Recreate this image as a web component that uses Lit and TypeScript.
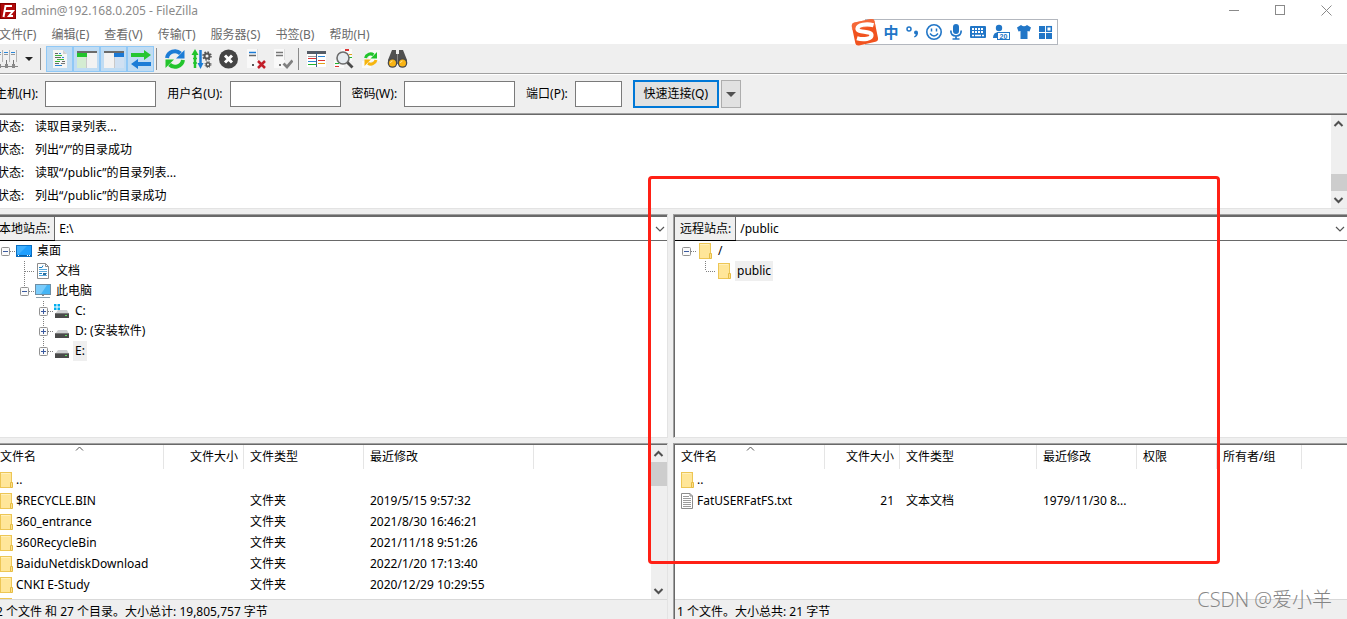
import { LitElement, html, svg, css, nothing, TemplateResult } from "lit";
import { customElement, property } from "lit/decorators.js";
import { classMap } from "lit/directives/class-map.js";

const folder = html`<svg width="13" height="16" viewBox="0 0 13 16" aria-hidden="true">
  <rect x="0.5" y="0.5" width="11" height="15" fill="#ffe699" stroke="#edc655" />
  <rect x="1" y="1" width="9" height="1" fill="#fff0bd" />
  <path d="M10.5 15.5V10.5h2v5z" fill="#ffe08a" stroke="#e5bc45" />
</svg>`;

const textFile = html`<svg width="13" height="16" viewBox="0 0 13 16" aria-hidden="true">
  <path d="M0.5 0.5h8.5l2.5 2.5v12.500h-11z" fill="#fff" stroke="#8c8c8c" />
  <path d="M9 0.500v2.500h2.500" fill="none" stroke="#8c8c8c" />
  <path d="M2 3.500h6M2 5.500h8M2 7.500h8M2 9.500h8M2 11.500h8M2 13.500h8" stroke="#9b9b9b" />
</svg>`;

const desktop = html`<svg width="16" height="16" viewBox="0 0 16 16" aria-hidden="true">
  <rect x="0.5" y="2.500" width="15" height="11" fill="#1e9fff" stroke="#0a6fc2" />
  <path d="M1 3h10L3 11H1z" fill="#3fb0ff" />
  <path d="M1 12.500h14" stroke="#0b5fa5" />
  <path d="M2 12.500h1M11 12.500h1M13 12.500h1" stroke="#fff" />
</svg>`;

const documents = html`<svg width="16" height="16" viewBox="0 0 16 16" aria-hidden="true">
  <path d="M2.500 0.500h8l3 3v12h-11z" fill="#fff" stroke="#8b8b8b" />
  <path d="M10.500 0.500v3h3" fill="none" stroke="#8b8b8b" />
  <path d="M4 6.500h8M4 8.500h8M8 10.500h4M4 12.500h8" stroke="#5aa9dc" />
  <path d="M4 4.500h3l1-2M4 10.500h3" stroke="#1780c4" fill="none" />
  <rect x="8" y="10" width="3" height="2" fill="#2d6f9c" />
</svg>`;

const computer = html`<svg width="16" height="16" viewBox="0 0 16 16" aria-hidden="true">
  <rect x="0.5" y="1.500" width="15" height="10" fill="#45b5f5" stroke="#6f8ea3" />
  <path d="M1 2h11L6 11H1z" fill="#7accfb" />
  <path d="M7 12h2v1H7z" fill="#888" />
  <path d="M1 14.500h14" stroke="#8aa0ad" />
</svg>`;

const drive = (system = false) => html`<svg width="16" height="16" viewBox="0 0 16 16" aria-hidden="true">
  ${system
    ? svg`<path d="M0 1h2.500v2.500H0zM3.500 1H6v2.500H3.500zM0 4.500h2.500V7H0zM3.500 4.500H6V7H3.500z" fill="#00adef" />`
    : nothing}
  <path d="M4 7h9l2 4H1z" fill="#cfd1d3" />
  <rect x="1" y="10" width="14" height="5" fill="#4a4a4a" />
  <rect x="1" y="10" width="14" height="1" fill="#777" />
  <rect x="11" y="12" width="2" height="1" fill="#5de05d" />
</svg>`;

const chevron = html`<svg width="10" height="6" viewBox="0 0 10 6" aria-hidden="true">
  <path d="M1 1l4 4 4-4" fill="none" stroke="#555" stroke-width="1.200" />
</svg>`;

const tool = (body: TemplateResult) =>
  html`<svg width="21" height="22" viewBox="0 0 21 22" aria-hidden="true">${body}</svg>`;

const tools = {
  sites: tool(svg`<path d="M0 2h5v12H0zM7 2h5v12H7zM14 2h5v12h-5z" fill="#f2f2f2" />
    <path d="M0 4.500h4M7 4.500h4M14 4.500h4" stroke="#2a86d6" />
    <path d="M0 6.500h4M7 6.500h4M14 6.500h4" stroke="#999" />
    <path d="M5.500 2v12M12.500 2v12M19.500 2v12" stroke="#b5b5b5" />
    <path d="M2.500 12v6M9.500 12v6M16.500 12v6" stroke="#777" /><path d="M0 18.500h21" stroke="#888" />
    <path d="M1 16h3v4H1zM8 16h3v4H8zM15 16h3v4h-3z" fill="#8a8a8a" />`),
  log: tool(svg`<path d="M4 2h10l4 4v14H4z" fill="#f5f5f5" /><path d="M14 2v4h4z" fill="#cfcfcf" />
    <path d="M6 5.500h3M6 9.500h6M6 15.500h4M13 13.500h3" stroke="#666" />
    <path d="M10 5.500h2M13 9.500h2M6 17.500h7" stroke="#2a86d6" />
    <path d="M6 7.500h7M8 11.500h7M6 13.500h5" stroke="#3bb43b" />
    <path d="M12 15.500h4" stroke="#777" />`),
  localTree: tool(svg`<rect x="1" y="3" width="20" height="17" fill="#f2f2f2" />
    <rect x="1" y="3" width="20" height="2" fill="#6b6b6b" />
    <rect x="1" y="5" width="10" height="4" fill="#22c42c" /><rect x="1" y="9" width="10" height="11" fill="#d4ecd2" />
    <path d="M10.500 9v11" stroke="#c9c9c9" />`),
  remoteTree: tool(svg`<rect x="1" y="3" width="20" height="17" fill="#f2f2f2" />
    <rect x="1" y="3" width="20" height="2" fill="#6b6b6b" />
    <rect x="11" y="5" width="10" height="4" fill="#1a78d4" /><rect x="11" y="9" width="10" height="11" fill="#cfe0f2" />
    <path d="M11.500 9v11" stroke="#c9c9c9" />`),
  queue: tool(svg`<path d="M1 5h13V2l7 5-7 5V9H1z" fill="#25c631" />
    <path d="M21 14H8v-3l-7 5 7 5v-3h13z" fill="#1c7cd6" />`),
  refresh: tool(svg`<path d="M3 10A8 8 0 0 1 16.500 5.500" fill="none" stroke="#1c7cd6" stroke-width="4" />
    <path d="M20.500 2v8.500H12z" fill="#1c7cd6" />
    <path d="M19 12A8 8 0 0 1 5.500 16.500" fill="none" stroke="#22c42c" stroke-width="4" />
    <path d="M1.500 20v-8.500H10z" fill="#22c42c" />`),
  process: tool(svg`<path d="M4 20V5" stroke="#22c42c" stroke-width="2.500" /><path d="M0.500 7L4 1l3.500 6z" fill="#22c42c" />
    <path d="M2 10.500h4M2 15h4" stroke="#22c42c" stroke-width="1.500" />
    <path d="M9.500 2v15" stroke="#1c7cd6" stroke-width="2.500" /><path d="M6.500 15h6l-3 6z" fill="#1c7cd6" />
    <circle cx="16" cy="8" r="2.500" fill="none" stroke="#555" stroke-width="2" />
    <circle cx="16" cy="8" r="4" fill="none" stroke="#555" stroke-width="1.500" stroke-dasharray="1.600 1.540" />
    <circle cx="17" cy="16.500" r="1.800" fill="none" stroke="#555" stroke-width="1.500" />
    <circle cx="17" cy="16.500" r="3" fill="none" stroke="#555" stroke-dasharray="1.200 1.200" />`),
  cancel: tool(svg`<circle cx="10.500" cy="11" r="9.500" fill="#454545" />
    <path d="M7 7.500l7 7M14 7.500l-7 7" stroke="#fff" stroke-width="3" />`),
  disconnect: tool(svg`<path d="M2 1h11v19H2z" fill="#f9f9f9" /><path d="M12.500 1v11" stroke="#ddd" />
    <path d="M4 4.500h7" stroke="#1c7cd6" stroke-width="1.500" /><path d="M4 7.500h7" stroke="#666" stroke-width="1.500" />
    <rect x="7" y="16" width="2" height="2" fill="#555" />
    <path d="M13 13l7 7M20 13l-7 7" stroke="#c21f2a" stroke-width="2.500" />`),
  reconnect: tool(svg`<path d="M2 1h11v19H2z" fill="#f9f9f9" /><path d="M12.500 1v11" stroke="#ddd" />
    <path d="M4 4.500h7M4 7.500h7" stroke="#777" stroke-width="1.500" />
    <rect x="7" y="16" width="2" height="2" fill="#777" />
    <path d="M11.500 15.500l3.500 3.500 5.500-6.500" fill="none" stroke="#808080" stroke-width="2.800" />`),
  filter: tool(svg`<rect x="1" y="4" width="19" height="15" fill="#fff" /><rect x="1" y="3" width="19" height="3" fill="#555c66" />
    <path d="M2 8.500h8" stroke="#999" /><path d="M2 10.500h8M12 12.500h7" stroke="#d33" />
    <path d="M2 13.500h8" stroke="#2a86d6" /><path d="M2 16.500h8" stroke="#22b42c" />
    <path d="M12 8.500h7" stroke="#2a86d6" /><path d="M12 15.500h7" stroke="#e5a11a" />
    <path d="M10.500 4v15" stroke="#3f5f85" />`),
  search: tool(svg`<rect x="8" y="1" width="11" height="12" fill="#fafafa" /><rect x="1" y="12" width="10" height="8" fill="#fafafa" />
    <path d="M12 2h4" stroke="#d33" stroke-width="2" /><path d="M16 6.500h3" stroke="#e5a11a" />
    <path d="M16 9.500h3M2 15.500h4" stroke="#22b42c" /><path d="M2 18.500h4" stroke="#d33" />
    <circle cx="10" cy="10" r="6" fill="#e6ebef" stroke="#6c6c6c" stroke-width="1.600" />
    <path d="M14.500 14.500l5 5" stroke="#4a4a4a" stroke-width="2.800" />`),
  sync: tool(svg`<rect x="9" y="2" width="11" height="11" fill="#fafafa" /><rect x="2" y="13" width="9" height="7" fill="#fafafa" />
    <path d="M5.500 10A5.200 5.200 0 0 1 13.500 6.800" fill="none" stroke="#22c42c" stroke-width="3" /><path d="M17 4v6.500H10.500z" fill="#22c42c" />
    <path d="M16 12A5.200 5.200 0 0 1 8 15.200" fill="none" stroke="#f6b50e" stroke-width="3" /><path d="M4.500 18v-6.500H11z" fill="#f6b50e" />`),
  find: tool(svg`<path d="M5 2h4v4h3V2h4l4 10v4H1v-4z" fill="#505050" /><path d="M10.500 6v10" stroke="#888" />
    <circle cx="5.500" cy="15" r="4.800" fill="#4a4a4a" /><circle cx="15.500" cy="15" r="4.800" fill="#4a4a4a" />
    <circle cx="5.500" cy="15" r="3.500" fill="#f9b414" /><circle cx="15.500" cy="15" r="3.500" fill="#f9b414" />
    <path d="M3.500 15a2 2 0 0 1 2-2M13.500 15a2 2 0 0 1 2-2" fill="none" stroke="#ffe08c" />`),
};

interface TreeItem {
  name: string;
  level: number;
  icon: TemplateResult;
  toggle?: "minus" | "plus";
  up?: boolean;
  down?: boolean;
  selected?: boolean;
}

interface Column {
  title: string;
  width?: number;
  end?: boolean;
  sorted?: boolean;
}

interface Row {
  icon: TemplateResult;
  cells: string[];
}

const localTree: TreeItem[] = [
  { name: "桌面", level: 0, icon: desktop, toggle: "minus" },
  { name: "文档", level: 1, icon: documents, up: true, down: true },
  { name: "此电脑", level: 1, icon: computer, toggle: "minus", up: true },
  { name: "C:", level: 2, icon: drive(true), toggle: "plus", up: true, down: true },
  { name: "D: (安装软件)", level: 2, icon: drive(), toggle: "plus", up: true, down: true },
  { name: "E:", level: 2, icon: drive(), toggle: "plus", up: true, selected: true },
];

const remoteTree: TreeItem[] = [
  { name: "/", level: 0, icon: folder, toggle: "minus" },
  { name: "public", level: 1, icon: folder, up: true, selected: true },
];

const localColumns: Column[] = [
  { title: "文件名", width: 170, sorted: true },
  { title: "文件大小", width: 80, end: true },
  { title: "文件类型", width: 120 },
  { title: "最近修改", width: 170 },
  { title: "" },
];

const remoteColumns: Column[] = [
  { title: "文件名", width: 150, sorted: true },
  { title: "文件大小", width: 75, end: true },
  { title: "文件类型", width: 137 },
  { title: "最近修改", width: 100 },
  { title: "权限", width: 80 },
  { title: "所有者/组", width: 85 },
  { title: "" },
];

const localRows: Row[] = [
  { icon: folder, cells: ["..", "", "", "", ""] },
  { icon: folder, cells: ["$RECYCLE.BIN", "", "文件夹", "2019/5/15 9:57:32", ""] },
  { icon: folder, cells: ["360_entrance", "", "文件夹", "2021/8/30 16:46:21", ""] },
  { icon: folder, cells: ["360RecycleBin", "", "文件夹", "2021/11/18 9:51:26", ""] },
  { icon: folder, cells: ["BaiduNetdiskDownload", "", "文件夹", "2022/1/20 17:13:40", ""] },
  { icon: folder, cells: ["CNKI E-Study", "", "文件夹", "2020/12/29 10:29:55", ""] },
  { icon: folder, cells: ["", "", "", "", ""] },
];

const remoteRows: Row[] = [
  { icon: folder, cells: ["..", "", "", "", "", "", ""] },
  { icon: textFile, cells: ["FatUSERFatFS.txt", "21", "文本文档", "1979/11/30 8...", "", "", ""] },
];

const base = css`
  * { box-sizing: border-box; }
  svg { display: block; flex: none; }
  button, input, select { font: inherit; color: inherit; margin: 0; padding: 0; border-radius: 0; }
  button { border: 0; background: none; display: flex; align-items: center; justify-content: center; }
`;

@customElement("scroll-bar")
export class ScrollBar extends LitElement {
  @property({ type: Number }) before = 0;
  @property({ type: Number }) size = 16;

  static styles = css`
    :host { display: flex; flex-direction: column; flex: none; width: 16px; background: #efefef; }
    svg { display: block; flex: none; }
    .track { flex: 1; display: flex; flex-direction: column; min-height: 0; }
    .thumb { background: #cdcdcd; }
  `;

  render() {
    return html`
      <svg width="16" height="17" viewBox="0 0 16 17"><path d="M3.500 11L7.500 7l4 4" fill="none" stroke="#505050" stroke-width="2" /></svg>
      <div class="track">
        <div style="height:${this.before}%"></div>
        <div class="thumb" style="height:${this.size}px"></div>
      </div>
      <svg width="16" height="17" viewBox="0 0 16 17"><path d="M3.500 7l4 4 4-4" fill="none" stroke="#505050" stroke-width="2" /></svg>
    `;
  }
}

@customElement("site-pane")
export class SitePane extends LitElement {
  @property() label = "";
  @property() path = "";
  @property() summary = "";
  @property({ type: Boolean }) scroll = false;
  @property({ attribute: false }) tree: TreeItem[] = [];
  @property({ attribute: false }) columns: Column[] = [];
  @property({ attribute: false }) rows: Row[] = [];

  static styles = [
    base,
    css`
      :host { display: flex; flex-direction: column; gap: 5px; min-width: 0; min-height: 0; }
      .sunken { border-top: 1px solid #a0a0a0; background: #fff; }
      :host([side="local"]) .sunken { border-right: 1px solid #e3e3e3; }
      :host([side="remote"]) .sunken { border-left: 1px solid #a0a0a0; }
      :host([side="remote"]) .inner { border-left: 1px solid #696969; }
      .inner { border-top: 1px solid #696969; height: 100%; display: flex; flex-direction: column; }
      .site { height: 224px; flex: none; border-bottom: 1px solid #e3e3e3; }
      .address { display: flex; height: 25px; flex: none; border-top: 1px solid #696969; border-bottom: 1px solid #696969; }
      .address label { display: flex; align-items: center; padding: 0 4px 0 5px; background: #efefef; border-right: 1px solid #696969; box-shadow: 0 1px #000; }
      .combo { flex: 1; display: grid; align-items: center; min-width: 0; }
      .combo > * { grid-area: 1 / 1; }
      .combo select { appearance: none; width: 100%; height: 100%; border: 0; background: #fff; padding: 0 20px 0 4px; outline: 0; }
      .combo svg { justify-self: end; margin-right: 2px; pointer-events: none; }
      .tree { list-style: none; margin: 0; padding: 0 0 0 2px; }
      .tree li { display: flex; height: 20px; align-items: center; }
      .indent { width: 19px; flex: none; }
      .tree .icon { width: 16px; margin: 0 3px 0 1px; display: flex; justify-content: center; }
      .tree .name { line-height: 20px; padding: 0 2px; }
      .tree .selected { background: #efefef; }
      .files { flex: 1; min-height: 0; display: flex; flex-direction: column; }
      .files .inner { flex: 1; min-height: 0; }
      .body { flex: 1; min-height: 0; display: flex; }
      .view { flex: 1; min-width: 0; overflow: hidden; }
      table { width: 100%; table-layout: fixed; border-collapse: separate; border-spacing: 0; }
      th, td { font-weight: 400; text-align: left; padding: 0 6px; white-space: nowrap; overflow: hidden; height: 21px; line-height: 20px; }
      th { height: 24px; border-right: 1px solid #e5e5e5; padding-right: 5px; }
      th:last-child { border-right: 0; }
      .end { text-align: right; }
      .head { display: grid; align-items: center; }
      .head > * { grid-area: 1 / 1; }
      .head svg { justify-self: center; align-self: start; }
      .file { display: flex; align-items: center; gap: 3px; }
      .status { height: 20px; flex: none; border-top: 1px solid #d9d9d9; background: #efefef; padding: 3px 2px 0; line-height: 18px; white-space: nowrap; }
    `,
  ];

  private branch(item: TreeItem) {
    return html`<svg width="19" height="20" viewBox="0 0 19 20" aria-hidden="true">
      <g stroke="#808080" stroke-dasharray="1 1" fill="none">
        ${item.up ? svg`<path d="M9.500 0v10" />` : nothing}
        ${item.down ? svg`<path d="M9.500 10v10" />` : nothing}
        <path d="M10 10.500h9" />
      </g>
      ${item.toggle
        ? svg`<rect x="5.500" y="6.500" width="8" height="8" rx="1" fill="#fafafa" stroke="#919191" />
          <path d="M7 10.500h5" stroke="#3b5aa0" />
          ${item.toggle === "plus" ? svg`<path d="M9.500 8v5" stroke="#3b5aa0" />` : nothing}`
        : nothing}
    </svg>`;
  }

  render() {
    return html`
      <section class="sunken site">
        <div class="inner">
          <div class="address">
            <label for="path">${this.label}</label>
            <div class="combo">
              <select id="path"><option>${this.path}</option></select>
              ${chevron}
            </div>
          </div>
          <ul class="tree" role="tree">
            ${this.tree.map(
              (item) => html`<li role="treeitem">
                ${Array.from({ length: item.level }, () => html`<span class="indent"></span>`)}
                ${this.branch(item)}
                <span class="icon">${item.icon}</span>
                <span class=${classMap({ name: true, selected: !!item.selected })}>${item.name}</span>
              </li>`,
            )}
          </ul>
        </div>
      </section>
      <section class="sunken files">
        <div class="inner">
          <div class="body">
            <div class="view">
              <table>
                <colgroup>
                  ${this.columns.map((c) => (c.width ? html`<col style="width:${c.width}px" />` : html`<col />`))}
                </colgroup>
                <thead>
                  <tr>
                    ${this.columns.map(
                      (c) => html`<th class=${classMap({ end: !!c.end })}>
                        ${c.sorted
                          ? html`<div class="head"><span>${c.title}</span>
                              <svg width="9" height="24" viewBox="0 0 9 24"><path d="M1 5.500l3.500-3.500L8 5.500" fill="none" stroke="#555" /></svg></div>`
                          : c.title}
                      </th>`,
                    )}
                  </tr>
                </thead>
                <tbody>
                  ${this.rows.map(
                    (row) => html`<tr>
                      ${row.cells.map((cell, i) =>
                        i === 0
                          ? html`<td><div class="file">${row.icon}<span>${cell}</span></div></td>`
                          : html`<td class=${classMap({ end: !!this.columns[i].end })}>${cell}</td>`,
                      )}
                    </tr>`,
                  )}
                </tbody>
              </table>
            </div>
            ${this.scroll ? html`<scroll-bar .size=${24}></scroll-bar>` : nothing}
          </div>
          <div class="status">${this.summary}</div>
        </div>
      </section>
    `;
  }
}

@customElement("ime-bar")
export class ImeBar extends LitElement {
  static styles = css`
    :host { display: flex; align-items: center; }
    svg { display: block; flex: none; }
    .logo { z-index: 1; margin-right: -14px; }
    .items { display: flex; align-items: center; gap: 4px; height: 24px; padding: 0 2px 0 17px; border: 1px solid #b3b7be; background: #fff; color: #2176c7; }
    .lang { width: 16px; text-align: center; font: 700 15px/20px "Noto Sans CJK SC", sans-serif; }
  `;

  render() {
    return html`
      <svg class="logo" width="28" height="28" viewBox="0 0 28 28">
        <path d="M3.500 4.500L20 1q3-.5 3.500 2L27 20q.5 3-2.500 3.800L8 27.500q-3 .5-3.600-2L.8 8.200Q.5 5.300 3.500 4.500z" fill="#f1531f" />
        <path d="M3.500 4.500L20 1q3-.5 3.500 2l1 5-23.500 4L.8 8.200Q.5 5.300 3.500 4.500z" fill="#f8774a" opacity=".6" />
        <path d="M22.500 7.200C15 5.200 7 7 6.500 10.500c-.5 4.500 13.500 2 14 6.500.3 4-8 5.200-14.500 3.300" fill="none" stroke="#fff" stroke-width="4.200" />
      </svg>
      <div class="items">
        <span class="lang">中</span>
        <svg width="18" height="18" viewBox="0 0 18 18"><circle cx="6" cy="6" r="2" fill="none" stroke="#2176c7" stroke-width="1.500" /><circle cx="13" cy="9.500" r="2" fill="#2176c7" /><path d="M15 9.500q0 4-3.500 5l-.5-1q2-1 2-3z" fill="#2176c7" /></svg>
        <svg width="18" height="18" viewBox="0 0 18 18"><circle cx="9" cy="9" r="7.200" fill="none" stroke="#2176c7" stroke-width="1.600" /><path d="M6.500 5.500v3M11.500 5.500v3M5 10.500q4 5 8 0" fill="none" stroke="#2176c7" stroke-width="1.500" /></svg>
        <svg width="18" height="18" viewBox="0 0 18 18"><rect x="6" y="1" width="6" height="10" rx="3" fill="#2176c7" /><path d="M3.800 7.500q0 5.500 5.200 5.500t5.200-5.500M9 13v3M5.500 16h7" fill="none" stroke="#2176c7" stroke-width="1.700" /></svg>
        <svg width="18" height="18" viewBox="0 0 18 18"><rect x="1" y="3" width="16" height="12" rx="1" fill="#2176c7" /><path d="M3 6h12M3 9h12" stroke="#fff" stroke-width="1.800" stroke-dasharray="2 1" /><path d="M3 12.500h2M6 12.500h6M13 12.500h2" stroke="#fff" stroke-width="1.500" /></svg>
        <svg width="20" height="18" viewBox="0 0 20 18"><circle cx="8" cy="5" r="3.200" fill="#2176c7" /><path d="M2 15q0-6 6-6t6 6z" fill="#2176c7" /><rect x="6.500" y="9.500" width="12" height="7" fill="#fff" stroke="#2176c7" /><text x="12.500" y="15.500" text-anchor="middle" font-size="7" font-weight="700" font-family="Liberation Sans, sans-serif" fill="#2176c7">20</text></svg>
        <svg width="18" height="18" viewBox="0 0 18 18"><path d="M6 2q3 2.500 6 0l4 2.500-1.500 4-2-.5v8h-7V8l-2 .5L2 4.500z" fill="#2176c7" /></svg>
        <svg width="18" height="18" viewBox="0 0 18 18"><path d="M2 3h6v6H2zM2 10h6v6H2zM9 10h6v6H9z" fill="#2176c7" /><rect x="9.700" y="3.700" width="4.600" height="4.600" fill="none" stroke="#2176c7" stroke-width="1.500" /></svg>
      </div>
    `;
  }
}

@customElement("app-root")
export class AppRoot extends LitElement {
  static styles = [
    base,
    css`
      :host { display: block; position: relative; height: 100vh; overflow: hidden; background: #efefef; color: #000; font: 12px/18px "Noto Sans", "Noto Sans CJK SC", sans-serif; }
      .window { display: flex; flex-direction: column; height: 100%; margin-left: -6px; }
      .title { display: flex; align-items: center; height: 21px; padding-left: 6px; background: #fff; color: #8a8a8a; }
      .title span { flex: 1; padding-left: 5px; }
      .controls { display: flex; gap: 4px; }
      .controls button { width: 42px; height: 21px; }
      .menu { display: flex; gap: 15px; height: 23px; padding: 5px 0 0 5px; background: #fff; color: #6a6a6a; }
      .menu button { color: inherit; line-height: 18px; }
      .tools { display: flex; align-items: center; height: 30px; border-bottom: 1px solid #a0a0a0; }
      .tools button { width: 27px; height: 26px; }
      .tools .on { background: #c0dcf3; box-shadow: inset 0 0 0 1px #90c8f6; }
      .tools .drop { width: 16px; }
      .rule { width: 1px; height: 22px; background: #8a8a8a; margin: 0 5px 0 3px; }
      .rule.group { margin: 0 4px 0 2px; }
      .quick { display: flex; align-items: center; height: 39px; border-top: 1px solid #fff; padding-left: 1px; }
      .quick label { white-space: nowrap; }
      .quick input { width: 111px; height: 26px; border: 1px solid #7a7a7a; background: #fff; margin: 0 11px 0 7px; }
      .quick .port { width: 47px; }
      .quick .connect { width: 86px; height: 28px; border: 2px solid #0078d7; background: #e1e1e1; margin-right: 2px; }
      .quick .more { width: 20px; height: 28px; border: 1px solid #adadad; background: #e1e1e1; }
      .log { display: flex; flex: none; margin-bottom: 5px; border-top: 1px solid #a0a0a0; border-bottom: 1px solid #e3e3e3; background: #fff; }
      .log-inner { flex: 1; display: flex; border-top: 1px solid #696969; }
      .lines { flex: 1; margin: 0; display: grid; grid-template-columns: 38px 1fr; padding: 0 0 1px 3px; line-height: 23px; }
      .lines dt, .lines dd { margin: 0; }
      .panes { flex: 1; min-height: 0; display: grid; grid-template-columns: minmax(0, 1fr) minmax(0, 1fr); gap: 5px; }
      .ime { position: absolute; right: 289px; top: 18px; }
      .marker { position: absolute; left: 648px; top: 176px; width: 572px; height: 388px; border: 3px solid #ff2015; border-radius: 4px; pointer-events: none; }
      .watermark { position: absolute; right: 15px; bottom: 6px; font: 300 20px/26px "Open Sans", "Noto Sans CJK SC", sans-serif; color: #858585; }
    `,
  ];

  render() {
    const toolButton = (name: keyof typeof tools, on = false) =>
      html`<button class=${classMap({ on })} aria-label=${name}>${tools[name]}</button>`;
    return html`
      <div class="window">
        <header class="title">
          <svg width="16" height="16" viewBox="0 0 16 16" aria-hidden="true">
            <rect width="16" height="16" fill="#b00a0a" /><rect x="0.5" y="0.5" width="15" height="15" fill="none" stroke="#8a0000" />
            <path d="M3.500 14L5.500 3H12M4.500 8H9M8.500 8H13L9 13h4" fill="none" stroke="#fff" stroke-width="2" />
          </svg>
          <span>admin@192.168.0.205 - FileZilla</span>
          <div class="controls">
            <button aria-label="minimize"><svg width="11" height="11"><path d="M0 5.500h10" stroke="#8a8a8a" /></svg></button>
            <button aria-label="maximize"><svg width="11" height="11"><rect x="0.5" y="0.5" width="9" height="9" fill="none" stroke="#8a8a8a" /></svg></button>
            <button aria-label="close"><svg width="11" height="11"><path d="M0.500 0.500l10 10M10.500 0.500l-10 10" stroke="#8a8a8a" /></svg></button>
          </div>
        </header>
        <nav class="menu">
          ${["文件(F)", "编辑(E)", "查看(V)", "传输(T)", "服务器(S)", "书签(B)", "帮助(H)"].map((m) => html`<button>${m}</button>`)}
        </nav>
        <div class="tools">
          ${toolButton("sites")}
          <button class="drop" aria-label="sites menu"><svg width="8" height="4"><path d="M0 0h8L4 4z" fill="#222" /></svg></button>
          <span class="rule"></span>
          ${toolButton("log", true)}${toolButton("localTree", true)}${toolButton("remoteTree", true)}${toolButton("queue", true)}
          <span class="rule group"></span>
          ${toolButton("refresh")}${toolButton("process")}${toolButton("cancel")}${toolButton("disconnect")}${toolButton("reconnect")}
          <span class="rule group"></span>
          ${toolButton("filter")}${toolButton("search")}${toolButton("sync")}${toolButton("find")}
        </div>
        <form class="quick">
          <label for="host">主机(H):</label><input id="host" />
          <label for="user">用户名(U):</label><input id="user" />
          <label for="pass">密码(W):</label><input id="pass" type="password" />
          <label for="port">端口(P):</label><input id="port" class="port" />
          <button class="connect" type="button">快速连接(Q)</button>
          <button class="more" type="button" aria-label="history"><svg width="10" height="5"><path d="M0 0h10L5 5z" fill="#505050" /></svg></button>
        </form>
        <section class="log">
          <div class="log-inner">
            <dl class="lines">
              ${["读取目录列表...", "列出“/”的目录成功", "读取“/public”的目录列表...", "列出“/public”的目录成功"].map(
                (line) => html`<dt>状态:</dt><dd>${line}</dd>`,
              )}
            </dl>
            <scroll-bar .before=${71} .size=${17}></scroll-bar>
          </div>
        </section>
        <main class="panes">
          <site-pane side="local" label="本地站点:" path="E:\\" summary="2 个文件 和 27 个目录。大小总计: 19,805,757 字节" scroll
            .tree=${localTree} .columns=${localColumns} .rows=${localRows}></site-pane>
          <site-pane side="remote" label="远程站点:" path="/public" summary="1 个文件。大小总共: 21 字节"
            .tree=${remoteTree} .columns=${remoteColumns} .rows=${remoteRows}></site-pane>
        </main>
      </div>
      <ime-bar class="ime"></ime-bar>
      <div class="marker"></div>
      <div class="watermark">CSDN @爱小羊</div>
    `;
  }
}
